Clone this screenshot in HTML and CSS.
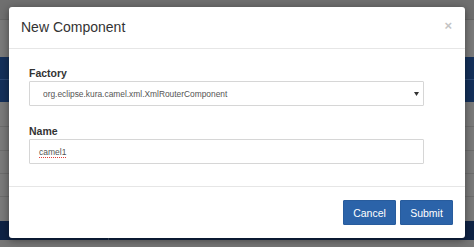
FILE: index.html
```html
<!DOCTYPE html>
<html lang="en">
<head>
<meta charset="utf-8">
<title>New Component</title>
<link rel="stylesheet" href="styles.css">
</head>
<body>
<div class="page">
  <div class="topbar"></div>
  <div class="gap"></div>
  <div class="thead">
    <div class="thead-row"></div>
    <div class="thead-row"></div>
  </div>
  <div class="rows">
    <div class="row r1"></div>
    <div class="row r2"></div>
    <div class="row r3"></div>
    <div class="row r4"></div>
    <div class="row r5"></div>
  </div>
  <div class="bottombar">
    <div class="bb-cell bb-first"></div>
    <div class="bb-cell"></div>
  </div>
</div>

<div class="modal">
  <div class="modal-header">
    <h4 class="modal-title">New Component</h4>
    <span class="close">&times;</span>
  </div>
  <div class="modal-body">
    <div class="form-group">
      <label class="label">Factory</label>
      <div class="select-wrap">
        <select class="control select">
          <option>org.eclipse.kura.camel.xml.XmlRouterComponent</option>
        </select>
        <svg class="caret" width="5" height="4" viewBox="0 0 5 4"><path d="M0 0 H5 L2.5 4 Z" fill="#333"/></svg>
      </div>
    </div>
    <div class="form-group name-group">
      <label class="label">Name</label>
      <div class="control input"><span class="misspelled">camel1</span></div>
    </div>
  </div>
  <div class="modal-footer">
    <button class="btn">Cancel</button>
    <button class="btn">Submit</button>
  </div>
</div>
</body>
</html>
```
FILE: styles.css
```css
html, body {
  margin: 0;
  padding: 0;
}
body {
  width: 474px;
  height: 247px;
  overflow: hidden;
  background: #767676;
  font-family: "Liberation Sans", Arial, sans-serif;
  position: relative;
}
.page {
  display: flex;
  flex-direction: column;
}
.topbar {
  height: 19px;
  background: #6f6f6f;
  border-bottom: 1px solid #666;
}
.gap {
  height: 37px;
  background: #7a7a7a;
}
.thead {
  display: flex;
  flex-direction: column;
  background: #14305a;
}
.thead-row {
  height: 22px;
}
.thead-row + .thead-row {
  border-top: 1px solid #2c4874;
}
.rows {
  display: flex;
  flex-direction: column;
  background: #7a7a7a;
}
.row {
  border-bottom: 1px solid #6c6c6c;
}
.r1 { height: 24px; }
.r2 { height: 23px; }
.r3 { height: 22px; }
.r4 { height: 22px; }
.r5 { height: 24px; border-bottom: none; }
.bottombar {
  height: 19px;
  background: #0f2345;
  display: flex;
}
.bb-cell {
  flex: 1;
}
.bb-first {
  flex: 0 0 108px;
  border-right: 1px solid #3a4c66;
}

.modal {
  position: absolute;
  left: 9px;
  top: 7px;
  width: 456px;
  height: 231px;
  background: #fff;
  border-radius: 3px;
  box-shadow: 0 2px 8px rgba(0, 0, 0, 0.45);
  display: flex;
  flex-direction: column;
}
.modal-header {
  height: 42px;
  box-sizing: border-box;
  border-bottom: 1px solid #e6e6e6;
  display: flex;
  align-items: center;
  justify-content: space-between;
  padding: 0 13px 2px 12px;
}
.modal-title {
  margin: 0;
  font-size: 14px;
  font-weight: normal;
  color: #333;
  line-height: 16px;
}
.close {
  font-size: 13px;
  font-weight: bold;
  color: #c4c4c4;
  line-height: 13px;
  margin-top: -2px;
}
.modal-body {
  padding: 18px 41px 0 20px;
  height: 138px;
  box-sizing: border-box;
  border-bottom: 1px solid #e6e6e6;
}
.form-group {
  display: flex;
  flex-direction: column;
}
.name-group {
  margin-top: 19px;
}
.label {
  font-size: 10.5px;
  font-weight: bold;
  color: #333;
  line-height: 13px;
  margin-bottom: 1px;
}
.select-wrap {
  position: relative;
}
.control {
  box-sizing: border-box;
  width: 395px;
  height: 25px;
  border: 1px solid #d6d6d6;
  border-radius: 1px;
  background: #fff;
  font-family: "Liberation Sans", Arial, sans-serif;
  color: #555;
}
.select {
  display: block;
  appearance: none;
  -webkit-appearance: none;
  font-size: 8.4px;
  padding: 0 0 0 13px;
  margin: 0;
  outline: none;
}
.caret {
  position: absolute;
  left: 385px;
  top: 11px;
}
.input {
  font-size: 8.5px;
  display: flex;
  align-items: center;
  padding-left: 9px;
}
.misspelled {
  text-decoration: underline dotted #e0403a;
  text-decoration-thickness: 1px;
  text-underline-offset: 2px;
}
.modal-footer {
  flex: 1;
  display: flex;
  justify-content: flex-end;
  align-items: flex-start;
  gap: 4px;
  padding: 13px 12px 0 0;
}
.btn {
  width: 53px;
  height: 25px;
  box-sizing: border-box;
  background: #2b63a9;
  border: 1px solid #285c9d;
  border-radius: 1px;
  color: #fff;
  font-family: "Liberation Sans", Arial, sans-serif;
  font-size: 10.5px;
  padding: 0;
  margin: 0;
}
```
